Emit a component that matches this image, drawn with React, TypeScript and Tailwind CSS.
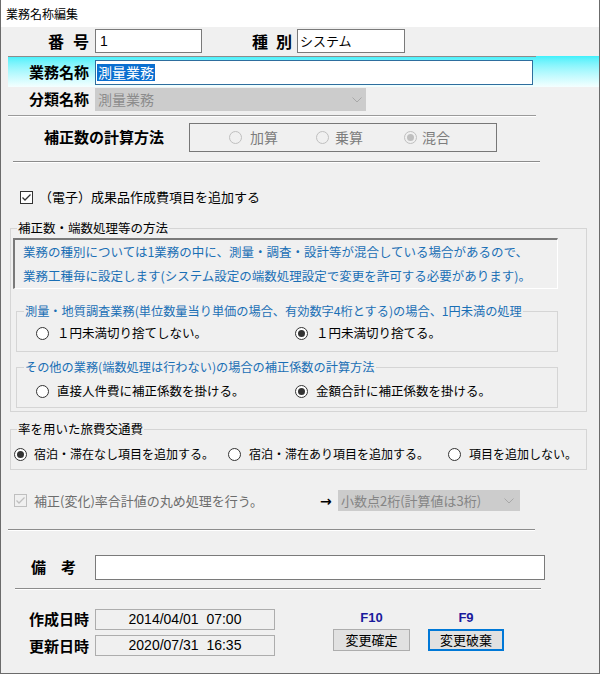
import React from "react";

function Radio({ checked = false, disabled = false }: { checked?: boolean; disabled?: boolean }) {
  return (
    <span
      className={
        disabled
          ? "w-[13px] h-[13px] rounded-full border border-[#bfbfbf] bg-[#f0f0f0] flex items-center justify-center shrink-0"
          : "w-[13px] h-[13px] rounded-full border border-[#333333] bg-white flex items-center justify-center shrink-0"
      }
    >
      {checked && (
        <span className={disabled ? "w-[7px] h-[7px] rounded-full bg-[#bfbfbf]" : "w-[7px] h-[7px] rounded-full bg-[#333333]"} />
      )}
    </span>
  );
}

function Check({ disabled = false }: { disabled?: boolean }) {
  return (
    <span
      className={
        disabled
          ? "w-[13px] h-[13px] border border-[#bfbfbf] bg-[#f0f0f0] flex items-center justify-center shrink-0"
          : "w-[13px] h-[13px] border border-[#333333] bg-white flex items-center justify-center shrink-0"
      }
    >
      <svg width="11" height="11" viewBox="0 0 11 11">
        <polyline
          points="1.5,5.5 4,8 9.5,2.5"
          fill="none"
          stroke={disabled ? "#bfbfbf" : "#333333"}
          strokeWidth="1.3"
        />
      </svg>
    </span>
  );
}

function Chevron() {
  return (
    <svg width="10" height="6" viewBox="0 0 10 6">
      <polyline points="0.5,0.5 5,5 9.5,0.5" fill="none" stroke="#a8a8a8" strokeWidth="1" />
    </svg>
  );
}

function Sep({ cls }: { cls: string }) {
  return <div className={cls} />;
}

export default function App() {
  return (
    <div className="w-[600px] h-[674px] bg-[#f0f0f0] border-l border-r border-b border-[#6b6b6b] flex flex-col text-black font-['Noto_Sans_CJK_JP',sans-serif] overflow-hidden">
      {/* title */}
      <div className="h-[27px] bg-white flex items-center pl-[5px] text-[12px] shrink-0">業務名称編集</div>

      {/* row 1 */}
      <div className="mt-[2px] flex items-center h-[24px]">
        <div className="ml-[47px] w-[41px] flex justify-between font-bold text-[16px] leading-none">
          <span>番</span>
          <span>号</span>
        </div>
        <div className="ml-[6px] w-[107px] h-[24px] bg-white border border-[#7a7a7a] flex items-center pl-[4px] text-[14px] font-['Liberation_Sans',sans-serif]">
          1
        </div>
        <div className="ml-[50px] w-[40px] flex justify-between font-bold text-[16px] leading-none">
          <span>種</span>
          <span>別</span>
        </div>
        <div className="ml-[5px] w-[108px] h-[24px] bg-white border border-[#7a7a7a] flex items-center pl-[2px] text-[13px]">
          システム
        </div>
      </div>

      {/* cyan band */}
      <div className="mt-[3px] ml-[7px] h-[31px] flex flex-col bg-linear-to-b from-[#3ef0fb] to-[#f4ffff]">
        <div className="h-[1px] w-[528px] bg-[#8c8c8c]" />
        <div className="flex items-start pt-[3px]">
          <div className="ml-[21px] w-[60px] h-[25px] flex items-center font-bold text-[15px]">業務名称</div>
          <div className="ml-[6px] w-[438px] h-[25px] bg-white border border-[#2e6e9e] flex items-center pl-[1px]">
            <span className="bg-[#0a6fd0] text-white text-[14px] leading-[17px] px-[1px]">測量業務</span>
          </div>
        </div>
      </div>

      {/* row 3 */}
      <div className="mt-[1px] flex items-center h-[23px]">
        <div className="ml-[28px] w-[60px] font-bold text-[15px]">分類名称</div>
        <div className="ml-[6px] w-[271px] h-[23px] bg-[#cccccc] flex items-center justify-between pl-[3px] pr-[4px] text-[14px] text-[#8c8c8c]">
          <span>測量業務</span>
          <Chevron />
        </div>
      </div>

      <Sep cls="mt-[4px] ml-[7px] w-[528px] h-[2px] border-t border-b border-t-[#9a9a9a] border-b-white" />

      {/* row 4 */}
      <div className="mt-[6px] flex items-center h-[29px]">
        <div className="ml-[43px] w-[145px] font-bold text-[15px]">補正数の計算方法</div>
        <div className="w-[308px] h-[29px] border border-[#777777] flex items-center pl-[39px] text-[14px] text-[#7d7d7d]">
          <div className="w-[87px] flex items-center gap-[8px]">
            <Radio disabled />
            <span>加算</span>
          </div>
          <div className="w-[88px] flex items-center gap-[6px]">
            <Radio disabled />
            <span>乗算</span>
          </div>
          <div className="flex items-center gap-[5px]">
            <Radio disabled checked />
            <span>混合</span>
          </div>
        </div>
      </div>

      <Sep cls="mt-[9px] ml-[12px] w-[527px] h-[2px] border-t border-b border-t-[#8c8c8c] border-b-white" />

      {/* checkbox */}
      <div className="mt-[27px] flex items-center h-[14px]">
        <div className="ml-[19px]">
          <Check />
        </div>
        <span className="ml-[6px] text-[13px]">（電子）成果品作成費項目を追加する</span>
      </div>

      {/* group 1 */}
      <fieldset className="mt-[16px] ml-[9px] w-[577px] border border-[#d5d5d5] pb-[3px]">
        <legend className="ml-[6px] px-[1px] text-[12.5px] leading-[16px]">補正数・端数処理等の方法</legend>
        <div className="mt-[2px] ml-[2px] w-[545px] border-t-2 border-l-2 border-r border-b border-t-[#7a7a7a] border-l-[#7a7a7a] border-r-white border-b-white pl-[8px] text-[#1a6fb5] text-[12.5px] leading-[24px]">
          <div>業務の種別については1業務の中に、測量・調査・設計等が混合している場合があるので、</div>
          <div>業務工種毎に設定します(システム設定の端数処理設定で変更を許可する必要があります)。</div>
        </div>

        <fieldset className="mt-[14px] ml-[5px] w-[542px] border border-[#d5d5d5] pb-[10px]">
          <legend className="ml-[7px] px-[1px] text-[12.2px] leading-[16px] text-[#1a6fb5]">
            測量・地質調査業務(単位数量当り単価の場合、有効数字4桁とする)の場合、1円未満の処理
          </legend>
          <div className="mt-[6px] h-[16px] flex items-center text-[12.5px]">
            <div className="ml-[19px] w-[259px] flex items-center gap-[8px]">
              <Radio />
              <span>１円未満切り捨てしない。</span>
            </div>
            <div className="flex items-center gap-[8px]">
              <Radio checked />
              <span>１円未満切り捨てる。</span>
            </div>
          </div>
        </fieldset>

        <fieldset className="mt-[7px] ml-[5px] w-[542px] border border-[#d5d5d5] pb-[8px]">
          <legend className="ml-[7px] px-[1px] text-[12.2px] leading-[16px] text-[#1a6fb5]">
            その他の業務(端数処理は行わない)の場合の補正係数の計算方法
          </legend>
          <div className="mt-[8px] h-[16px] flex items-center text-[12.5px]">
            <div className="ml-[19px] w-[259px] flex items-center gap-[8px]">
              <Radio />
              <span>直接人件費に補正係数を掛ける。</span>
            </div>
            <div className="flex items-center gap-[8px]">
              <Radio checked />
              <span>金額合計に補正係数を掛ける。</span>
            </div>
          </div>
        </fieldset>
      </fieldset>

      {/* group 2 */}
      <fieldset className="mt-[9px] ml-[9px] w-[577px] border border-[#d5d5d5] pb-[7px]">
        <legend className="ml-[6px] px-[1px] text-[12.5px] leading-[16px]">率を用いた旅費交通費</legend>
        <div className="mt-[9px] h-[16px] flex items-center text-[12px]">
          <div className="ml-[3px] w-[214px] flex items-center gap-[7px]">
            <Radio checked />
            <span>宿泊・滞在なし項目を追加する。</span>
          </div>
          <div className="w-[220px] flex items-center gap-[8px]">
            <Radio />
            <span>宿泊・滞在あり項目を追加する。</span>
          </div>
          <div className="flex items-center gap-[8px]">
            <Radio />
            <span>項目を追加しない。</span>
          </div>
        </div>
      </fieldset>

      {/* disabled row */}
      <div className="mt-[20px] flex items-center h-[21px]">
        <div className="ml-[13px]">
          <Check disabled />
        </div>
        <span className="ml-[7px] w-[279px] text-[13px] text-[#6d6d6d]">補正(変化)率合計値の丸め処理を行う。</span>
        <span className="ml-[7px] w-[13px] text-[14px] font-bold leading-none font-['DejaVu_Sans',sans-serif]">→</span>
        <div className="ml-[5px] w-[182px] h-[21px] bg-[#cccccc] flex items-center justify-between pl-[3px] pr-[6px] text-[13px] text-[#858585]">
          <span>小数点2桁(計算値は3桁)</span>
          <Chevron />
        </div>
      </div>

      <Sep cls="mt-[18px] ml-[7px] w-[527px] h-[2px] border-t border-b border-t-[#8c8c8c] border-b-white" />

      {/* remarks */}
      <div className="mt-[24px] flex items-center h-[25px]">
        <div className="ml-[30px] w-[45px] flex justify-between font-bold text-[15px]">
          <span>備</span>
          <span>考</span>
        </div>
        <div className="ml-[19px] w-[450px] h-[25px] bg-white border border-[#7a7a7a]" />
      </div>

      <Sep cls="mt-[8px] ml-[14px] w-[526px] h-[2px] border-t border-b border-t-[#8c8c8c] border-b-white" />

      {/* bottom */}
      <div className="mt-[18px] flex">
        <div className="ml-[28px] flex flex-col gap-[4px]">
          <div className="flex items-center">
            <div className="w-[60px] font-bold text-[15px]">作成日時</div>
            <div className="ml-[6px] w-[180px] h-[21px] border border-[#adadad] flex items-center justify-center text-[14px] whitespace-pre font-['Liberation_Sans',sans-serif]">
              {"2014/04/01  07:00"}
            </div>
          </div>
          <div className="flex items-center">
            <div className="w-[60px] font-bold text-[15px]">更新日時</div>
            <div className="ml-[6px] w-[180px] h-[21px] border border-[#adadad] flex items-center justify-center text-[14px] whitespace-pre font-['Liberation_Sans',sans-serif]">
              {"2020/07/31  16:35"}
            </div>
          </div>
        </div>
        <div className="ml-[58px] w-[77px] flex flex-col items-center pt-[2px]">
          <div className="h-[16px] leading-[16px] text-[13px] font-bold text-[#1a1a9c] font-['Liberation_Sans',sans-serif]">F10</div>
          <div className="mt-[3px] w-[77px] h-[22px] bg-[#e1e1e1] border border-[#adadad] flex items-center justify-center text-[13px]">
            変更確定
          </div>
        </div>
        <div className="ml-[18px] w-[76px] flex flex-col items-center pt-[2px]">
          <div className="h-[16px] leading-[16px] text-[13px] font-bold text-[#1a1a9c] font-['Liberation_Sans',sans-serif]">F9</div>
          <div className="mt-[3px] w-[76px] h-[22px] bg-[#e1e1e1] border-2 border-[#0078d7] flex items-center justify-center text-[13px]">
            変更破棄
          </div>
        </div>
      </div>
    </div>
  );
}
